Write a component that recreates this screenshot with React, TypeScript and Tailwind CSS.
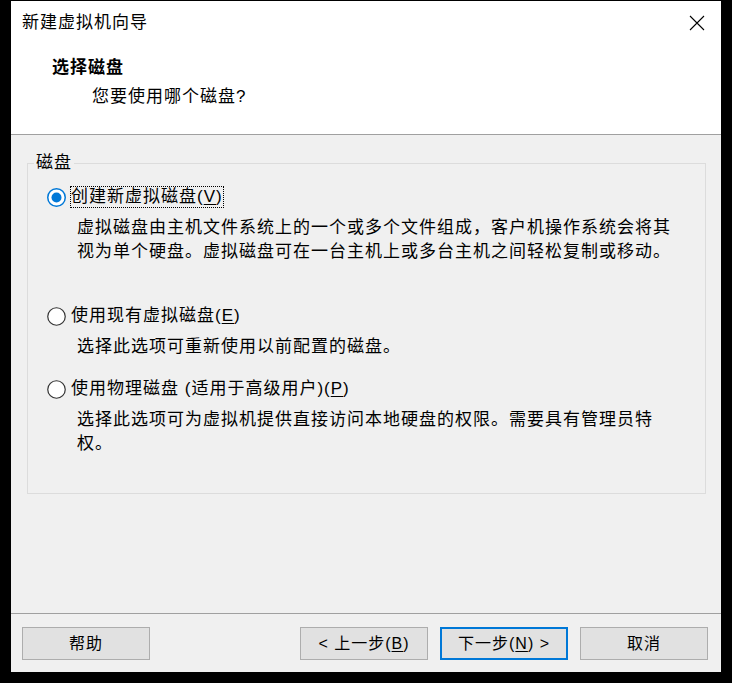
import React from "react";

const font = "font-['Liberation_Sans','Noto_Sans_CJK_SC',sans-serif]";

function Radio({ checked }: { checked?: boolean }) {
  return (
    <svg width="19" height="19" viewBox="0 0 19 19" className="shrink-0">
      <circle
        cx="9.5"
        cy="9.5"
        r="8.75"
        fill="#ffffff"
        stroke={checked ? "#0078d7" : "#333333"}
        strokeWidth={checked ? 1.5 : 1.2}
      />
      {checked && <circle cx="9.5" cy="9.5" r="5" fill="#0078d7" />}
    </svg>
  );
}

function Option({
  checked,
  label,
  mnemonic,
  focused,
  mt,
  children,
}: {
  checked?: boolean;
  label: string;
  mnemonic: string;
  focused?: boolean;
  mt: string;
  children: React.ReactNode;
}) {
  return (
    <div className={mt}>
      <div className="flex items-center h-[22px]">
        <Radio checked={checked} />
        <span
          className={`ml-[4px] px-[1px] h-[22px] flex items-center leading-[20px] ${
            focused ? "outline outline-1 outline-dotted outline-black -outline-offset-1" : ""
          }`}
        >
          {label}(<span className="underline underline-offset-2">{mnemonic}</span>)
        </span>
      </div>
      <p className="mt-[8px] ml-[30px] leading-[24px]">{children}</p>
    </div>
  );
}

function Button({ children, primary }: { children: React.ReactNode; primary?: boolean }) {
  return (
    <button
      className={`w-[128px] h-[33px] bg-[#e1e1e1] flex items-center justify-center text-[16px] text-black ${
        primary ? "border-2 border-[#0078d7]" : "border border-[#adadad]"
      }`}
    >
      {children}
    </button>
  );
}

export default function App() {
  return (
    <div className={`w-[732px] h-[683px] bg-black pt-[1px] pl-[11px] ${font} text-[17px] tracking-[1px] text-black`}>
      <div className="w-[710px] h-[671px] bg-[#f0f0f0] flex flex-col">
        {/* title bar */}
        <div className="h-[43px] bg-white flex items-center justify-between pl-[11px] pr-[16px] pt-[1px]">
          <span>新建虚拟机向导</span>
          <svg width="16" height="16" viewBox="0 0 16 16">
            <path d="M1 1 L15 15 M15 1 L1 15" stroke="#000" strokeWidth="1.1" />
          </svg>
        </div>

        {/* header */}
        <div className="h-[91px] bg-white border-b border-[#a0a0a0]">
          <div className="pl-[41px] pt-[12px] leading-[24px] font-bold">选择磁盘</div>
          <div className="pl-[81px] pt-[5px] leading-[24px]">您要使用哪个磁盘?</div>
        </div>

        {/* body */}
        <div className="flex-1 px-[16px] pt-[28px]">
          <div className="relative w-[679px] h-[331px] border border-[#dcdcdc] pl-[19px]">
            <span className="absolute -top-[12px] left-[6px] px-[2px] bg-[#f0f0f0] leading-[22px]">磁盘</span>
            <Option checked focused label="创建新虚拟磁盘" mnemonic="V" mt="mt-[22px]">
              虚拟磁盘由主机文件系统上的一个或多个文件组成，客户机操作系统会将其
              <br />
              视为单个硬盘。虚拟磁盘可在一台主机上或多台主机之间轻松复制或移动。
            </Option>
            <Option label="使用现有虚拟磁盘" mnemonic="E" mt="mt-[41px]">
              选择此选项可重新使用以前配置的磁盘。
            </Option>
            <Option label="使用物理磁盘 (适用于高级用户)" mnemonic="P" mt="mt-[19px]">
              选择此选项可为虚拟机提供直接访问本地硬盘的权限。需要具有管理员特
              <br />
              权。
            </Option>
          </div>
        </div>

        {/* footer */}
        <div className="h-[59px] shrink-0 border-t border-[#a0a0a0] flex items-start pt-[13px] pl-[11px] pr-[13px]">
          <Button>帮助</Button>
          <div className="ml-auto flex gap-[12px]">
            <Button>
              &lt; 上一步(<span className="underline underline-offset-2">B</span>)
            </Button>
            <Button primary>
              下一步(<span className="underline underline-offset-2">N</span>) &gt;
            </Button>
            <Button>取消</Button>
          </div>
        </div>
      </div>
    </div>
  );
}
